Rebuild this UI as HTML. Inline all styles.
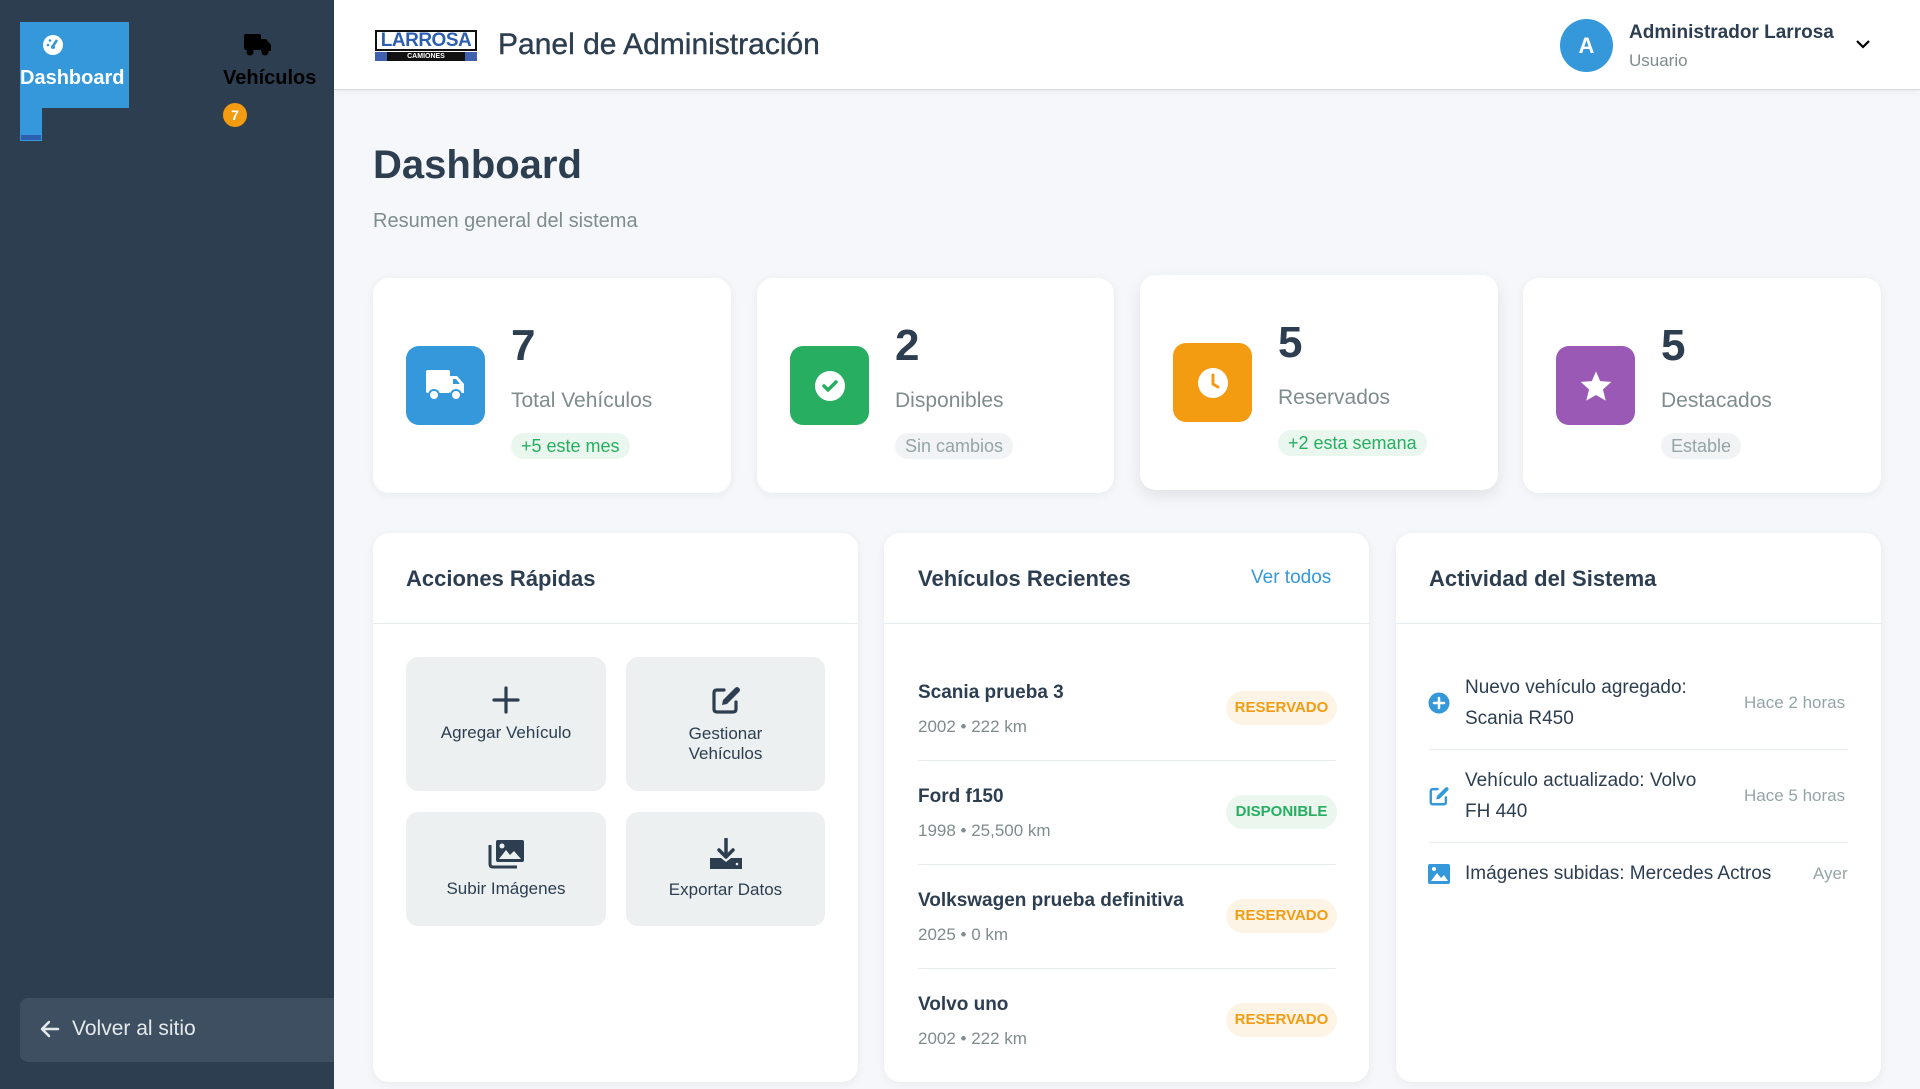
<!DOCTYPE html>
<html><head><meta charset="utf-8"><style>
*{box-sizing:border-box;margin:0;padding:0}
body{width:1920px;height:1089px;overflow:hidden;background:#f5f7fa;font-family:"Liberation Sans",sans-serif;color:#2c3e50;position:relative}
.a{position:absolute}
.side{left:0;top:0;width:334px;height:1089px;background:#2c3e50}
.hdr{left:334px;top:0;width:1586px;height:90px;background:#fff;border-bottom:1px solid #d5d9dd;box-shadow:0 2px 6px rgba(0,0,0,.05)}
.card{background:#fff;border-radius:16px;box-shadow:0 2px 10px rgba(0,0,0,.06)}
.ic{width:79px;height:79px;border-radius:13px;display:flex;align-items:center;justify-content:center}
.num{font-size:44px;font-weight:bold;color:#2c3e50;line-height:1}
.lbl{font-size:21px;color:#7f8c8d;line-height:1}
.pill{height:26px;border-radius:13px;padding:0 10px;font-size:18px;line-height:26px}
.ptitle{font-size:22px;font-weight:bold;color:#2c3e50}
.qa{background:#ecf0f1;border-radius:12px;display:flex;flex-direction:column;align-items:center;justify-content:center;font-size:17px;color:#2c3e50;text-align:center;line-height:20px}
.vt{font-size:19px;font-weight:bold;color:#2c3e50}
.vs{font-size:17px;color:#7f8c8d}
.bd{height:34px;border-radius:17px;font-size:15px;font-weight:bold;line-height:34px;text-align:center;width:111px}
.sep{height:1px;background:#e6ecef}
.at{font-size:19px;color:#2c3e50;line-height:31px}
.tm{font-size:17px;color:#95a5a6}
</style></head><body>
<div class="a side"></div>
<div class="a" style="left:20px;top:22px;width:109px;height:86px;background:#3498db"></div>
<div class="a" style="left:20px;top:22px;width:22px;height:119px;background:#3498db"></div>
<div class="a" style="left:21px;top:135px;width:20px;height:5px;background:#2d5fb0"></div>
<svg class="a" style="left:42px;top:34px" width="22" height="22" viewBox="0 0 22 22"><circle cx="11" cy="11" r="10" fill="#fff"/><path d="M11 12 L15 6" stroke="#3498db" stroke-width="2.5"/><circle cx="11" cy="13" r="2" fill="#3498db"/><circle cx="6" cy="11" r="1.3" fill="#3498db"/><circle cx="8" cy="6.5" r="1.3" fill="#3498db"/></svg>
<div class="a" style="left:20px;top:67px;font-size:20px;font-weight:bold;color:#fff">Dashboard</div>
<svg class="a" style="left:244px;top:34px" width="27" height="22" viewBox="0 0 27 22"><rect x="0" y="0" width="17" height="16" rx="2" fill="#000"/><path d="M17 5 H22 L27 11 V17 H17Z" fill="#000"/><circle cx="6" cy="18" r="3.5" fill="#000"/><circle cx="21" cy="18" r="3.5" fill="#000"/></svg>
<div class="a" style="left:223px;top:67px;font-size:20px;font-weight:bold;color:#000">Vehículos</div>
<div class="a" style="left:223px;top:103px;width:24px;height:24px;border-radius:12px;background:#f39c12;color:#fff;font-size:14px;font-weight:bold;text-align:center;line-height:24px">7</div>
<div class="a" style="left:20px;top:998px;width:314px;height:64px;background:#3d4f61;border-radius:8px 0 0 8px"></div>
<svg class="a" style="left:40px;top:1020px" width="20" height="18" viewBox="0 0 20 18"><path d="M18 9 H3 M9 2 L2 9 L9 16" stroke="#e5e9ec" stroke-width="2.5" fill="none" stroke-linecap="round" stroke-linejoin="round"/></svg>
<div class="a" style="left:72px;top:1017px;font-size:21px;color:#e5e9ec">Volver al sitio</div>

<div class="a hdr"></div>
<div class="a" style="left:375px;top:30px;width:102px;height:31px">
<div style="border:2px solid #111;height:21px;background:#fff;color:#2d5fb0;font-weight:bold;font-size:19px;line-height:18px;text-align:center;letter-spacing:-.5px">LARROSA</div>
<div style="margin-top:1px;height:9px;background:linear-gradient(90deg,#4060b0 0 12%,#111 12% 88%,#4060b0 88%);color:#fff;font-size:7px;font-weight:bold;text-align:center;line-height:9px">CAMIONES</div></div>
<div class="a" style="left:498px;top:28px;font-size:30px;color:#2c3e50;-webkit-text-stroke:.4px #2c3e50">Panel de Administración</div>
<div class="a" style="left:1560px;top:19px;width:53px;height:53px;border-radius:50%;background:#3498db;color:#fff;font-size:22px;font-weight:bold;text-align:center;line-height:53px">A</div>
<div class="a" style="left:1629px;top:22px;font-size:19px;font-weight:bold">Administrador Larrosa</div>
<div class="a" style="left:1629px;top:51px;font-size:17px;color:#7f8c8d">Usuario</div>
<svg class="a" style="left:1855px;top:39px" width="16" height="10" viewBox="0 0 16 10"><path d="M2 2 L8 8 L14 2" stroke="#000" stroke-width="2.2" fill="none"/></svg>

<div class="a" style="left:373px;top:143px;font-size:40px;font-weight:bold">Dashboard</div>
<div class="a" style="left:373px;top:210px;font-size:20px;color:#7f8c8d">Resumen general del sistema</div>

<div class="a card" style="left:373px;top:278px;width:358px;height:215px"></div>
<div class="a ic" style="left:406px;top:346px;background:#3498db"><svg width="40" height="32" viewBox="0 0 40 32"><rect x="0" y="0" width="24" height="23" rx="2" fill="#fff"/><path d="M24 6 H31 L38 14 V23 H24Z" fill="#fff"/><path d="M27 9 H30 L34 14 H27Z" fill="#3498db"/><circle cx="8" cy="25" r="5" fill="#fff" stroke="#3498db" stroke-width="2"/><circle cx="30" cy="25" r="5" fill="#fff" stroke="#3498db" stroke-width="2"/></svg></div>
<div class="a num" style="left:511px;top:324px">7</div>
<div class="a lbl" style="left:511px;top:390px">Total Vehículos</div>
<div class="a pill" style="left:511px;top:433px;background:#e9f7ef;color:#27ae60">+5 este mes</div>

<div class="a card" style="left:757px;top:278px;width:357px;height:215px"></div>
<div class="a ic" style="left:790px;top:346px;background:#27ae60"><svg width="32" height="32" viewBox="0 0 32 32"><circle cx="16" cy="16" r="15" fill="#fff"/><path d="M10 16 L14 20 L22 12" stroke="#27ae60" stroke-width="3.5" fill="none" stroke-linecap="round" stroke-linejoin="round"/></svg></div>
<div class="a num" style="left:895px;top:324px">2</div>
<div class="a lbl" style="left:895px;top:390px">Disponibles</div>
<div class="a pill" style="left:895px;top:433px;background:#f1f3f4;color:#95a5a6">Sin cambios</div>

<div class="a card" style="left:1140px;top:275px;width:358px;height:215px;box-shadow:0 6px 16px rgba(0,0,0,.09)"></div>
<div class="a ic" style="left:1173px;top:343px;background:#f39c12"><svg width="32" height="32" viewBox="0 0 32 32"><circle cx="16" cy="16" r="15" fill="#fff"/><path d="M16 8 V17 L21 20" stroke="#f39c12" stroke-width="3" fill="none" stroke-linecap="round"/></svg></div>
<div class="a num" style="left:1278px;top:321px">5</div>
<div class="a lbl" style="left:1278px;top:387px">Reservados</div>
<div class="a pill" style="left:1278px;top:430px;background:#e9f7ef;color:#27ae60">+2 esta semana</div>

<div class="a card" style="left:1523px;top:278px;width:358px;height:215px"></div>
<div class="a ic" style="left:1556px;top:346px;background:#9b59b6"><svg width="34" height="32" viewBox="0 0 24 23"><path d="M12 1 L15 8 L23 8.5 L17 14 L19 22 L12 18 L5 22 L7 14 L1 8.5 L9 8Z" fill="#fff"/></svg></div>
<div class="a num" style="left:1661px;top:324px">5</div>
<div class="a lbl" style="left:1661px;top:390px">Destacados</div>
<div class="a pill" style="left:1661px;top:433px;background:#f1f3f4;color:#95a5a6">Estable</div>

<div class="a card" style="left:373px;top:533px;width:485px;height:549px"></div>
<div class="a sep" style="left:373px;top:623px;width:485px"></div>
<div class="a ptitle" style="left:406px;top:566px">Acciones Rápidas</div>
<div class="a qa" style="left:406px;top:657px;width:200px;height:134px"><svg width="30" height="30" viewBox="0 0 30 30"><path d="M15 3 V27 M3 15 H27" stroke="#2c3e50" stroke-width="3.2" stroke-linecap="round"/></svg><div style="margin-top:8px">Agregar Vehículo</div><div style="height:20px"></div></div>
<div class="a qa" style="left:626px;top:657px;width:199px;height:134px"><svg width="32" height="32" viewBox="0 0 32 32"><path d="M14 6 H7 Q4 6 4 9 V25 Q4 28 7 28 H23 Q26 28 26 25 V18" stroke="#2c3e50" stroke-width="3.2" fill="none" stroke-linecap="round"/><path d="M12 21 L13 16 L25 4 Q27 2 29 4 Q31 6 29 8 L17 20Z" fill="#2c3e50"/></svg><div style="margin-top:8px">Gestionar<br>Vehículos</div></div>
<div class="a qa" style="left:406px;top:812px;width:200px;height:114px"><svg width="38" height="30" viewBox="0 0 38 30"><path d="M3 6 V25 Q3 28 6 28 H30" stroke="#2c3e50" stroke-width="3" fill="none"/><rect x="9" y="1" width="28" height="22" rx="2" fill="#2c3e50"/><path d="M12 20 L19 11 L23 16 L27 12 L34 20Z" fill="#ecf0f1"/><circle cx="15" cy="7" r="2.5" fill="#ecf0f1"/></svg><div style="margin-top:10px">Subir Imágenes</div></div>
<div class="a qa" style="left:626px;top:812px;width:199px;height:114px"><svg width="34" height="32" viewBox="0 0 34 32"><path d="M17 1 V18 M10 12 L17 19 L24 12" stroke="#2c3e50" stroke-width="3.5" fill="none" stroke-linecap="round" stroke-linejoin="round"/><path d="M1 20 H12 L17 24 L22 20 H33 V31 H1Z" fill="#2c3e50"/><circle cx="28" cy="26" r="1.3" fill="#ecf0f1"/></svg><div style="margin-top:10px">Exportar Datos</div></div>

<div class="a card" style="left:884px;top:533px;width:485px;height:549px"></div>
<div class="a sep" style="left:884px;top:623px;width:485px"></div>
<div class="a ptitle" style="left:918px;top:566px">Vehículos Recientes</div>
<div class="a" style="left:1251px;top:567px;font-size:19px;color:#3498db">Ver todos</div>

<div class="a vt" style="left:918px;top:682px">Scania prueba 3</div><div class="a vs" style="left:918px;top:717px">2002 • 222 km</div>
<div class="a bd" style="left:1226px;top:691px;background:#fef4e6;color:#f39c12">RESERVADO</div>
<div class="a sep" style="left:918px;top:760px;width:418px"></div>
<div class="a vt" style="left:918px;top:786px">Ford f150</div><div class="a vs" style="left:918px;top:821px">1998 • 25,500 km</div>
<div class="a bd" style="left:1226px;top:795px;background:#eaf6ee;color:#27ae60">DISPONIBLE</div>
<div class="a sep" style="left:918px;top:864px;width:418px"></div>
<div class="a vt" style="left:918px;top:890px">Volkswagen prueba definitiva</div><div class="a vs" style="left:918px;top:925px">2025 • 0 km</div>
<div class="a bd" style="left:1226px;top:899px;background:#fef4e6;color:#f39c12">RESERVADO</div>
<div class="a sep" style="left:918px;top:968px;width:418px"></div>
<div class="a vt" style="left:918px;top:994px">Volvo uno</div><div class="a vs" style="left:918px;top:1029px">2002 • 222 km</div>
<div class="a bd" style="left:1226px;top:1003px;background:#fef4e6;color:#f39c12">RESERVADO</div>

<div class="a card" style="left:1396px;top:533px;width:485px;height:549px"></div>
<div class="a sep" style="left:1396px;top:623px;width:485px"></div>
<div class="a ptitle" style="left:1429px;top:566px">Actividad del Sistema</div>

<svg class="a" style="left:1428px;top:692px" width="22" height="22" viewBox="0 0 22 22"><circle cx="11" cy="11" r="10.5" fill="#3498db"/><path d="M11 6 V16 M6 11 H16" stroke="#fff" stroke-width="2.5" stroke-linecap="round"/></svg>
<div class="a at" style="left:1465px;top:672px">Nuevo vehículo agregado:<br>Scania R450</div>
<div class="a tm" style="left:1744px;top:693px">Hace 2 horas</div>
<div class="a sep" style="left:1429px;top:749px;width:419px"></div>
<svg class="a" style="left:1428px;top:785px" width="22" height="22" viewBox="0 0 32 32"><path d="M14 6 H7 Q4 6 4 9 V25 Q4 28 7 28 H23 Q26 28 26 25 V18" stroke="#3498db" stroke-width="3.5" fill="none" stroke-linecap="round"/><path d="M12 21 L13 16 L25 4 Q27 2 29 4 Q31 6 29 8 L17 20Z" fill="#3498db"/></svg>
<div class="a at" style="left:1465px;top:765px">Vehículo actualizado: Volvo<br>FH 440</div>
<div class="a tm" style="left:1744px;top:786px">Hace 5 horas</div>
<div class="a sep" style="left:1429px;top:842px;width:419px"></div>
<svg class="a" style="left:1428px;top:864px" width="22" height="20" viewBox="0 0 22 20"><rect x="0" y="0" width="22" height="20" rx="2" fill="#3498db"/><path d="M3 17 L9 9 L13 14 L16 11 L20 17Z" fill="#fff"/><circle cx="6" cy="5" r="2" fill="#fff"/></svg>
<div class="a at" style="left:1465px;top:858px">Imágenes subidas: Mercedes Actros</div>
<div class="a tm" style="left:1813px;top:864px">Ayer</div>
</body></html>
